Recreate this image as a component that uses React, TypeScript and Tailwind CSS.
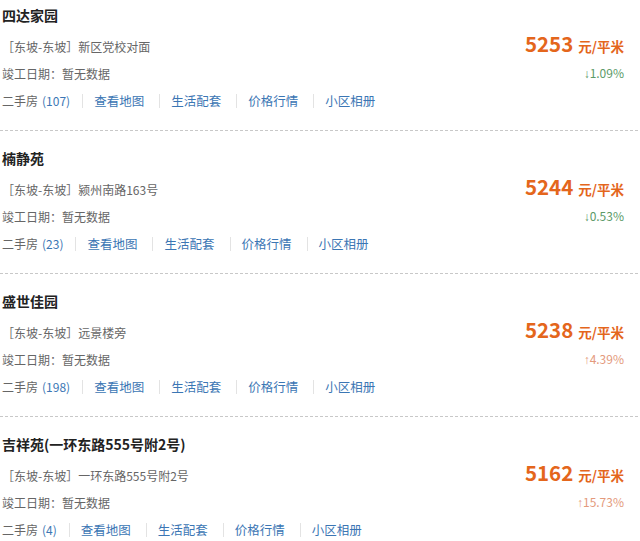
import React from "react";

type Item = {
  name: string;
  addr: string;
  count: number;
  price: number;
  change: string;
  up: boolean;
};

const items: Item[] = [
  { name: "四达家园", addr: "新区党校对面", count: 107, price: 5253, change: "1.09%", up: false },
  { name: "楠静苑", addr: "颍州南路163号", count: 23, price: 5244, change: "0.53%", up: false },
  { name: "盛世佳园", addr: "远景楼旁", count: 198, price: 5238, change: "4.39%", up: true },
  { name: "吉祥苑(一环东路555号附2号)", addr: "一环东路555号附2号", count: 4, price: 5162, change: "15.73%", up: true },
];

const Sep = ({ first }: { first?: boolean }) => (
  <span className={`${first ? "ml-[12px]" : "ml-[15px]"} mr-[11px] inline-block h-[14px] w-px bg-[#e3e3e3]`} />
);

export default function App() {
  return (
    <div
      className="w-[640px] bg-white"
      style={{ fontFamily: '"Noto Sans CJK SC", "Noto Sans", sans-serif' }}
    >
      {items.map((it, i) => (
        <div
          key={i}
          className={`${i === 0 ? "pt-[5px]" : "pt-[17px]"} ${i < items.length - 1 ? "border-b border-dashed border-[#c8c8c8] pb-[19px]" : "pb-[5px]"} mr-[2px]`}
        >
          <div className="pl-[2px] h-5 leading-5 text-[14px] font-bold text-[#222]">{it.name}</div>
          <div className="mt-3 flex justify-between pr-[14px]">
            <div className="flex flex-col">
              <div className="h-5 leading-5 text-[12px] text-[#666] pl-[2px]">
                ［东坡-东坡］{it.addr}
              </div>
              <div className="mt-[7px] h-5 leading-5 text-[12px] text-[#666] pl-[2px]">竣工日期：暂无数据</div>
              <div className="mt-[7px] h-5 flex items-center text-[12px] pl-[2px]">
                <span className="text-[#666]">二手房</span>
                <span className="ml-1 text-[#3b76b4]">({it.count})</span>
                <Sep first />
                <span className="text-[#3b76b4] text-[12.5px]">查看地图</span>
                <Sep />
                <span className="text-[#3b76b4] text-[12.5px]">生活配套</span>
                <Sep />
                <span className="text-[#3b76b4] text-[12.5px]">价格行情</span>
                <Sep />
                <span className="text-[#3b76b4] text-[12.5px]">小区相册</span>
              </div>
            </div>
            <div className="flex flex-col items-end">
              <div className="h-5 flex items-baseline mt-[-4px] text-[#e4661c] font-bold">
                <span className="text-[20.5px] leading-5">{it.price}</span>
                <span className="ml-[5px] text-[13.5px]">元/平米</span>
              </div>
              <div
                className={`mt-[10px] h-5 leading-5 text-[12px] ${it.up ? "text-[#e49a7c]" : "text-[#5c9a68]"}`}
              >
                <span style={{ fontFamily: '"Liberation Sans", sans-serif' }}>{it.up ? "↑" : "↓"}</span>
                {it.change}
              </div>
            </div>
          </div>
        </div>
      ))}
    </div>
  );
}
